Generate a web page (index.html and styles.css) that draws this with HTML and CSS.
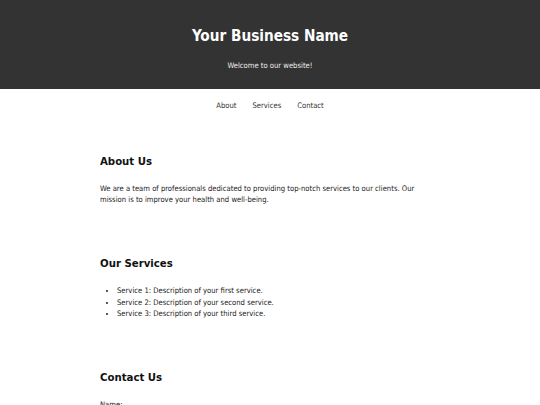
FILE: index.html
```html
<!DOCTYPE html>
<html>
<head>
<meta charset="utf-8">
<link rel="stylesheet" href="styles.css">
</head>
<body>
<header class="site-header">
  <h1 class="site-title">Your Business Name</h1>
  <p class="site-tagline">Welcome to our website!</p>
</header>
<nav class="site-nav">
  <a href="#about">About</a>
  <a href="#services">Services</a>
  <a href="#contact">Contact</a>
</nav>
<main class="content">
  <section class="block" id="about">
    <h2 class="block-title">About Us</h2>
    <p class="block-text">We are a team of professionals dedicated to providing top-notch services to our clients. Our mission is to improve your health and well-being.</p>
  </section>
  <section class="block" id="services">
    <h2 class="block-title">Our Services</h2>
    <ul class="service-list">
      <li>Service 1: Description of your first service.</li>
      <li>Service 2: Description of your second service.</li>
      <li>Service 3: Description of your third service.</li>
    </ul>
  </section>
  <section class="block" id="contact">
    <h2 class="block-title">Contact Us</h2>
    <form class="contact-form">
      <label class="field-label">Name:</label>
    </form>
  </section>
</main>
</body>
</html>
```
FILE: styles.css
```css
html, body {
  margin: 0;
  padding: 0;
  background: #fff;
}
body {
  font-family: "DejaVu Sans Condensed", "DejaVu Sans", sans-serif;
  font-stretch: condensed;
  font-size: 7.6px;
  color: #222;
}
.site-header {
  background: #333;
  color: #fff;
  text-align: center;
  height: 89px;
  box-sizing: border-box;
  padding-top: 26px;
}
.site-title {
  margin: 0;
  font-size: 15.2px;
  font-weight: bold;
  line-height: 20px;
}
.site-tagline {
  margin: 14px 0 0;
  font-size: 7.6px;
  line-height: 12px;
  color: #eee;
}
.site-nav {
  display: flex;
  justify-content: center;
  gap: 16px;
  padding: 11px 0 9px;
}
.site-nav a {
  color: #333;
  text-decoration: none;
  font-size: 7.6px;
  line-height: 12px;
}
.content {
  width: 340px;
  margin: 0 auto;
  padding-top: 31.5px;
}
.block {
  margin-bottom: 49.5px;
}
.block-title {
  margin: 0 0 12px;
  font-size: 11.3px;
  line-height: 18px;
  color: #111;
}
.block-text {
  margin: 0;
  line-height: 11.5px;
}
.service-list {
  margin: 0;
  padding-left: 17px;
  line-height: 11.5px;
}
.field-label {
  display: block;
  line-height: 11.5px;
}
```
